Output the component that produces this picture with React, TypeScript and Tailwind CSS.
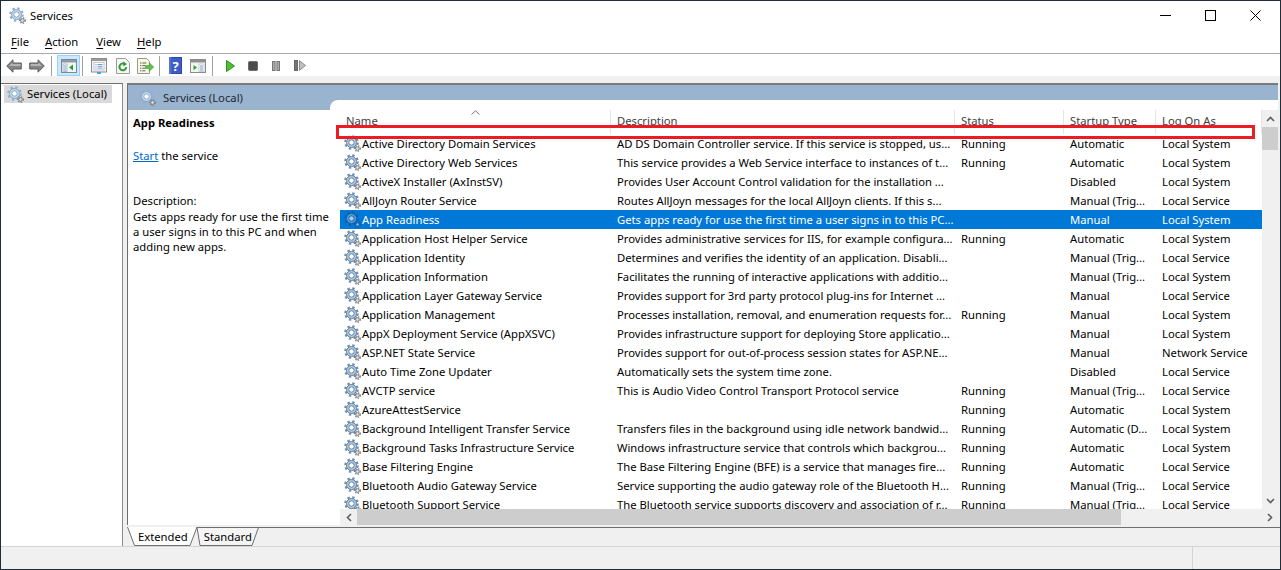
const rows: [string, string, string, string, string][] = [
  ["Active Directory Domain Services", "AD DS Domain Controller service. If this service is stopped, us...", "Running", "Automatic", "Local System"],
  ["Active Directory Web Services", "This service provides a Web Service interface to instances of t...", "Running", "Automatic", "Local System"],
  ["ActiveX Installer (AxInstSV)", "Provides User Account Control validation for the installation ...", "", "Disabled", "Local System"],
  ["AllJoyn Router Service", "Routes AllJoyn messages for the local AllJoyn clients. If this s...", "", "Manual (Trig...", "Local Service"],
  ["App Readiness", "Gets apps ready for use the first time a user signs in to this PC...", "", "Manual", "Local System"],
  ["Application Host Helper Service", "Provides administrative services for IIS, for example configura...", "Running", "Automatic", "Local System"],
  ["Application Identity", "Determines and verifies the identity of an application. Disabli...", "", "Manual (Trig...", "Local Service"],
  ["Application Information", "Facilitates the running of interactive applications with additio...", "", "Manual (Trig...", "Local System"],
  ["Application Layer Gateway Service", "Provides support for 3rd party protocol plug-ins for Internet ...", "", "Manual", "Local Service"],
  ["Application Management", "Processes installation, removal, and enumeration requests for...", "Running", "Manual", "Local System"],
  ["AppX Deployment Service (AppXSVC)", "Provides infrastructure support for deploying Store applicatio...", "", "Manual", "Local System"],
  ["ASP.NET State Service", "Provides support for out-of-process session states for ASP.NE...", "", "Manual", "Network Service"],
  ["Auto Time Zone Updater", "Automatically sets the system time zone.", "", "Disabled", "Local Service"],
  ["AVCTP service", "This is Audio Video Control Transport Protocol service", "Running", "Manual (Trig...", "Local Service"],
  ["AzureAttestService", "", "Running", "Automatic", "Local System"],
  ["Background Intelligent Transfer Service", "Transfers files in the background using idle network bandwid...", "Running", "Automatic (D...", "Local System"],
  ["Background Tasks Infrastructure Service", "Windows infrastructure service that controls which backgrou...", "Running", "Automatic", "Local System"],
  ["Base Filtering Engine", "The Base Filtering Engine (BFE) is a service that manages fire...", "Running", "Automatic", "Local Service"],
  ["Bluetooth Audio Gateway Service", "Service supporting the audio gateway role of the Bluetooth H...", "Running", "Manual (Trig...", "Local Service"],
  ["Bluetooth Support Service", "The Bluetooth service supports discovery and association of r...", "Running", "Manual (Trig...", "Local Service"],
];

function Gear({ selected = false, muted = false }: { selected?: boolean; muted?: boolean }) {
  const teeth = selected ? "#0f5fa8" : muted ? "#8fb0d0" : "#6e8fb0";
  const body = selected ? "#5c9fdc" : muted ? "#c3d8ec" : "#b4cbe2";
  const ring = selected ? "#0f5fa8" : muted ? "#86a6c6" : "#5f7f9f";
  const core = selected ? "#a9cff2" : "#ffffff";
  return (
    <svg width="17" height="17" viewBox="0 0 17 17" className="shrink-0">
      <circle cx="7.5" cy="7.5" r="6.2" fill="none" stroke={teeth} strokeWidth="2.2" strokeDasharray="2.4 2.47" />
      <circle cx="7.5" cy="7.5" r="5" fill={body} stroke={ring} strokeWidth="1" />
      <circle cx="7.5" cy="7.5" r="2.7" fill={core} stroke={ring} strokeWidth="1" />
      <circle cx="13.5" cy="13.5" r="2.7" fill="none" stroke={selected ? "#0f5fa8" : "#7b8086"} strokeWidth="1.5" strokeDasharray="1.3 1.3" />
      <circle cx="13.5" cy="13.5" r="1.8" fill={selected ? "#7db4e6" : "#dfe3e7"} stroke={selected ? "#0f5fa8" : "#74797f"} strokeWidth="0.9" />
    </svg>
  );
}

function ArrowIcon({ dir }: { dir: "left" | "right" }) {
  return (
    <svg width="16" height="14" viewBox="0 0 16 14" className={dir === "right" ? "-scale-x-100" : ""}>
      <path d="M0.7 7 L7 0.8 V4 H15.3 V10 H7 V13.2 Z" fill="#858585" stroke="#5f5f5f" strokeWidth="1" strokeLinejoin="round" />
      <path d="M3 7 L6.5 3.6 V5 H14.5 V7 Z" fill="#b4b4b4" />
    </svg>
  );
}

function PaneIcon() {
  return (
    <svg width="16" height="14" viewBox="0 0 16 14">
      <rect x="0.5" y="0.5" width="15" height="13" fill="#f2f6fa" stroke="#7c8a96" />
      <rect x="1" y="1" width="14" height="2.5" fill="#8e9aa5" />
      <rect x="2" y="5" width="4" height="7.5" fill="#fff" stroke="#96a3ae" strokeWidth="0.7" />
      <path d="M2.8 7h2.4M2.8 9h2.4M2.8 11h2.4" stroke="#4f83b5" strokeWidth="0.8" />
      <path d="M12 5.5 V11.5 L8 8.5 Z" fill="#2aa32a" />
    </svg>
  );
}

function PropsIcon() {
  return (
    <svg width="16" height="16" viewBox="0 0 16 16">
      <rect x="0.5" y="0.5" width="15" height="13.5" fill="#f4f4f4" stroke="#8c8c8c" />
      <rect x="1" y="1" width="14" height="2" fill="#9a9a9a" />
      <rect x="3" y="4.5" width="10" height="7.5" fill="#fff" stroke="#aab4bd" strokeWidth="0.7" />
      <path d="M4.5 6.5h1M6.5 6.5h5M4.5 8.3h1M6.5 8.3h5M4.5 10.1h1M6.5 10.1h5" stroke="#5f8fc0" strokeWidth="0.9" />
      <rect x="6" y="14" width="4" height="2" fill="#38a8e8" />
    </svg>
  );
}

function RefreshIcon() {
  return (
    <svg width="14" height="16" viewBox="0 0 14 16">
      <path d="M0.5 0.5 H9.5 L13.5 4.5 V15.5 H0.5 Z" fill="#f7f7f7" stroke="#9a9a9a" />
      <path d="M10.2 9.2 A3.4 3.4 0 1 1 8.7 6.1" fill="none" stroke="#2f9a2f" strokeWidth="2" />
      <path d="M7.3 3.6 L11 6 L7.4 8.4 Z" fill="#2f9a2f" />
    </svg>
  );
}

function ExportIcon() {
  return (
    <svg width="17" height="16" viewBox="0 0 17 16">
      <path d="M0.5 0.5 H9.5 L12.5 3.5 V15.5 H0.5 Z" fill="#fbf6df" stroke="#9a9a8a" />
      <path d="M3 5h1.4M5.3 5h4M3 7.6h1.4M5.3 7.6h3M3 10.2h1.4M5.3 10.2h3M3 12.8h1.4M5.3 12.8h3" stroke="#55606c" strokeWidth="1" />
      <path d="M8.5 7.6 H12.3 V4.8 L16.7 9 L12.3 13.2 V10.4 H8.5 Z" fill="#5fc04a" stroke="#3d9a32" strokeWidth="0.6" />
    </svg>
  );
}

function HelpIcon() {
  return (
    <svg width="13" height="17" viewBox="0 0 13 17">
      <rect x="0" y="0" width="13" height="17" fill="#2c46ad" />
      <rect x="0" y="0" width="2.5" height="17" fill="#5a73d0" />
      <rect x="3" y="1" width="9" height="15" fill="#3e5bc6" />
    </svg>
  );
}

function ActionPaneIcon() {
  return (
    <svg width="16" height="14" viewBox="0 0 16 14">
      <rect x="0.5" y="0.5" width="15" height="13" fill="#f4f4f4" stroke="#8c8c8c" />
      <rect x="1" y="1" width="14" height="2.5" fill="#8f8f8f" />
      <path d="M3.5 6 L7 8.6 L3.5 11.2 Z" fill="#2aa32a" />
      <rect x="9" y="5" width="5" height="7.5" fill="#fff" stroke="#aab4bd" strokeWidth="0.6" />
      <path d="M10 7h3M10 9h3M10 11h3" stroke="#4f83b5" strokeWidth="0.8" />
    </svg>
  );
}

function PlayIcon() {
  return (
    <svg width="9" height="12" viewBox="0 0 9 12">
      <path d="M0.5 0.5 L8.5 6 L0.5 11.5 Z" fill="#4fc02c" stroke="#2c8f1e" strokeWidth="1" />
    </svg>
  );
}

function StopIcon() {
  return (
    <svg width="10" height="10" viewBox="0 0 10 10">
      <rect x="0.5" y="0.5" width="9" height="9" rx="1" fill="#4c4c4c" stroke="#6e6e6e" />
    </svg>
  );
}

function PauseIcon() {
  return (
    <svg width="8" height="10" viewBox="0 0 8 10">
      <rect x="0.5" y="0.5" width="2.6" height="9" fill="#a9a9a9" stroke="#777" />
      <rect x="4.9" y="0.5" width="2.6" height="9" fill="#a9a9a9" stroke="#777" />
    </svg>
  );
}

function ResumeIcon() {
  return (
    <svg width="12" height="11" viewBox="0 0 12 11">
      <rect x="0.5" y="0.5" width="3" height="10" fill="#777" stroke="#666" />
      <path d="M5.5 0.7 L11.5 5.5 L5.5 10.3 Z" fill="#c0c0c0" stroke="#8a8a8a" />
    </svg>
  );
}

function Sep() {
  return <div className="h-[20px] w-px bg-[#a0a0a0]" />;
}

function Menu({ u, rest, className = "" }: { u: string; rest: string; className?: string }) {
  return (
    <span className={className}>
      <span className="underline underline-offset-2">{u}</span>
      {rest}
    </span>
  );
}

const cols = ["w-[271px]", "w-[344px]", "w-[109px]", "w-[92px]", "w-[106px]"];

export default function App() {
  return (
    <div
      className="flex h-[570px] w-[1281px] flex-col overflow-hidden border border-[#1f2d3a] bg-[#f0f0f0] text-[11.25px] leading-[16px] text-black"
      style={{ fontFamily: '"Noto Sans", sans-serif' }}
    >
      {/* Title bar */}
      <div className="flex h-[29px] items-center bg-white pl-[8px]">
        <Gear muted />
        <span className="ml-[4px]">Services</span>
        <div className="ml-auto flex items-center">
          <svg width="11" height="11" viewBox="0 0 11 11" className="mr-[34px]"><path d="M0 5.5H11" stroke="#000" /></svg>
          <svg width="11" height="11" viewBox="0 0 11 11" className="mr-[34px]"><rect x="0.5" y="0.5" width="10" height="10" fill="none" stroke="#000" /></svg>
          <svg width="11" height="11" viewBox="0 0 11 11" className="mr-[19px]"><path d="M0.5 0.5L10.5 10.5M10.5 0.5L0.5 10.5" stroke="#000" /></svg>
        </div>
      </div>
      {/* Menu */}
      <div className="flex h-[24px] items-center gap-[16px] border-b border-[#a8a8b4] bg-white pl-[10px]">
        <Menu u="F" rest="ile" />
        <Menu u="A" rest="ction" />
        <Menu u="V" rest="iew" className="ml-[2px]" />
        <Menu u="H" rest="elp" />
      </div>
      {/* Toolbar */}
      <div className="flex h-[22px] items-center bg-white pl-[5px] pt-[1px]">
        <ArrowIcon dir="left" />
        <div className="ml-[7px]"><ArrowIcon dir="right" /></div>
        <div className="ml-[6px]"><Sep /></div>
        <div className="ml-[5px] flex h-[21px] w-[23px] items-center justify-center border border-[#99d1ff] bg-[#cce8ff]"><PaneIcon /></div>
        <div className="ml-[2px]"><Sep /></div>
        <div className="ml-[8px]"><PropsIcon /></div>
        <div className="ml-[9px]"><RefreshIcon /></div>
        <div className="ml-[7px]"><ExportIcon /></div>
        <div className="ml-[5px]"><Sep /></div>
        <div className="relative ml-[9px]">
          <HelpIcon />
          <span className="absolute inset-0 flex items-center justify-center text-[13px] font-bold text-white">?</span>
        </div>
        <div className="ml-[8px]"><ActionPaneIcon /></div>
        <div className="ml-[6px]"><Sep /></div>
        <div className="ml-[13px]"><PlayIcon /></div>
        <div className="ml-[13px]"><StopIcon /></div>
        <div className="ml-[14px]"><PauseIcon /></div>
        <div className="ml-[14px]"><ResumeIcon /></div>
      </div>
      {/* Main */}
      <div className="mt-[7px] flex min-h-0 flex-1">
        {/* Tree */}
        <div className="w-[122px] shrink-0 border-t border-r border-t-[#6e6e6e] border-r-[#8a8a8a] bg-white pl-[3px] pt-[1px]">
          <div className="flex h-[18px] w-[108px] items-center gap-[3px] bg-[#d9d9d9] pl-[3px]">
            <Gear muted />
            <span className="whitespace-nowrap">Services (Local)</span>
          </div>
        </div>
        {/* Right */}
        <div className="ml-[4px] flex min-w-0 flex-1 flex-col">
          <div className="mr-[2px] flex min-h-0 flex-1 flex-col border-t-2 border-l border-t-[#7a7a7a] border-l-[#6e6e6e] bg-white">
            <div className="flex h-[25px] shrink-0 items-center gap-[7px] bg-[#9ab4d0] pl-[11px]">
              <Gear muted />
              <span className="text-[#1c2733]">Services (Local)</span>
            </div>
            <div className="flex min-h-0 flex-1">
              <div className="w-[202px] shrink-0 whitespace-nowrap pl-[5px] pt-[5px]">
                <div className="font-bold">App Readiness</div>
                <div className="mt-[17px]"><span className="text-[#0066cc] underline">Start</span> the service</div>
                <div className="mt-[29px]">Description:</div>
                <div className="leading-[15px]">
                  <div>Gets apps ready for use the first time</div>
                  <div>a user signs in to this PC and when</div>
                  <div>adding new apps.</div>
                </div>
              </div>
              {/* List */}
              <div className="relative z-10 -mt-[10px] flex min-w-0 flex-1 flex-col overflow-hidden rounded-tl-[8px] bg-white pt-[10px]">
                <div className="flex min-h-0 flex-1">
                  <div className="min-w-0 flex-1 overflow-hidden pl-[10px]">
                    <div className="relative flex h-[24px] items-end">
                      <svg width="9" height="5" viewBox="0 0 9 5" className="absolute left-[131px] top-0"><path d="M0.5 4.5L4.5 0.8L8.5 4.5" fill="none" stroke="#777" /></svg>
                      {["Name", "Description", "Status", "Startup Type", "Log On As"].map((h, i) => (
                        <div key={h} className={`${cols[i]} flex h-[24px] shrink-0 items-center border-r border-[#e5e5e5] pb-[2px] pl-[6px] text-[#404040]`}>{h}</div>
                      ))}
                    </div>
                    {rows.map((r, i) => {
                      const sel = i === 4;
                      return (
                        <div key={r[0]} className={`flex h-[19px] items-center whitespace-nowrap ${sel ? "bg-[#0078d7] text-white" : ""}`}>
                          <div className={`${cols[0]} flex shrink-0 items-center gap-[1px] pl-[4px]`}>
                            <Gear selected={sel} />
                            <span>{r[0]}</span>
                          </div>
                          <div className={`${cols[1]} shrink-0 pl-[6px]`}>{r[1]}</div>
                          <div className={`${cols[2]} shrink-0 pl-[6px]`}>{r[2]}</div>
                          <div className={`${cols[3]} shrink-0 pl-[6px]`}>{r[3]}</div>
                          <div className={`${cols[4]} shrink-0 pl-[6px]`}>{r[4]}</div>
                        </div>
                      );
                    })}
                  </div>
                  {/* vertical scrollbar */}
                  <div className="flex w-[16px] shrink-0 flex-col bg-[#f0f0f0]">
                    <div className="flex h-[17px] items-center justify-center">
                      <svg width="9" height="6" viewBox="0 0 9 6"><path d="M1 5L4.5 1.5L8 5" fill="none" stroke="#606060" strokeWidth="1.6" /></svg>
                    </div>
                    <div className="h-[23px] bg-[#cdcdcd]" />
                    <div className="flex-1" />
                    <div className="flex h-[17px] items-center justify-center">
                      <svg width="9" height="6" viewBox="0 0 9 6"><path d="M1 1L4.5 4.5L8 1" fill="none" stroke="#606060" strokeWidth="1.6" /></svg>
                    </div>
                  </div>
                </div>
                {/* horizontal scrollbar */}
                <div className="ml-[10px] flex h-[16px] shrink-0 items-center bg-[#f0f0f0]">
                  <div className="flex w-[17px] justify-center">
                    <svg width="6" height="9" viewBox="0 0 6 9"><path d="M5 1L1.5 4.5L5 8" fill="none" stroke="#606060" strokeWidth="1.6" /></svg>
                  </div>
                  <div className="h-full w-[764px] bg-[#cdcdcd]" />
                  <div className="flex-1" />
                  <div className="flex w-[17px] justify-center">
                    <svg width="6" height="9" viewBox="0 0 6 9"><path d="M1 1L4.5 4.5L1 8" fill="none" stroke="#606060" strokeWidth="1.6" /></svg>
                  </div>
                </div>
              </div>
            </div>
          </div>
          {/* Tabs */}
          <div className="relative mt-[2px] flex h-[19px] shrink-0 items-center pl-[11px]">
            <svg width="1154" height="19" viewBox="0 0 1154 19" className="absolute left-0 top-0">
              <path d="M0.5 0 L7.5 18.5 H63 L70 0 Z" fill="#ffffff" />
              <path d="M0.5 0 L7.5 18.5 H63 L70 0" fill="none" stroke="#6e6e6e" />
              <path d="M70 0.5 L73 18.5 H125 L131.5 0.5" fill="#f4f4f4" />
              <path d="M70 0.5 L73 18.5 H125 L131.5 0.5" fill="none" stroke="#6e6e6e" />
              <path d="M70 0.5 H1154" stroke="#6e6e6e" />
            </svg>
            <span className="relative">Extended</span>
            <span className="relative ml-[16px]">Standard</span>
          </div>
        </div>
      </div>
      {/* Status bar */}
      <div className="flex h-[23px] shrink-0 justify-end border-t border-[#d4d4d4] bg-[#f0f0f0]">
        <div className="w-[88px] border-l border-[#d4d4d4]" />
      </div>
      {/* annotation */}
      <div className="absolute left-[336px] top-[125px] z-20 h-[14px] w-[919px] border-[3px] border-[#ed1c24]" />
    </div>
  );
}
